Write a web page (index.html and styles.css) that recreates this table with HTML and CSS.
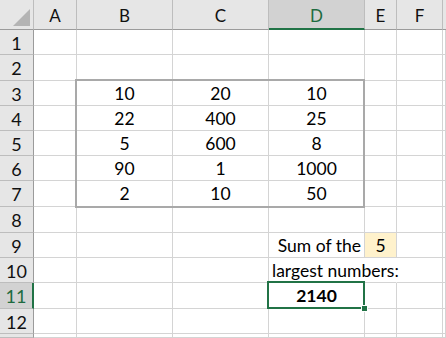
FILE: index.html
```html
<!DOCTYPE html>
<html>
<head>
<meta charset="utf-8">
<link rel="stylesheet" href="styles.css">
</head>
<body>
<div class="wrap">
<div class="sheet">
  <div class="corner"><span class="tri"></span></div>
  <div class="ch">A</div>
  <div class="ch">B</div>
  <div class="ch">C</div>
  <div class="ch sel">D</div>
  <div class="ch">E</div>
  <div class="ch">F</div>
  <div class="ch last"></div>

  <div class="rh">1</div><div class="c"></div><div class="c"></div><div class="c"></div><div class="c"></div><div class="c"></div><div class="c"></div><div class="c"></div>
  <div class="rh">2</div><div class="c"></div><div class="c"></div><div class="c"></div><div class="c"></div><div class="c"></div><div class="c"></div><div class="c"></div>
  <div class="rh">3</div><div class="c"></div><div class="c n">10</div><div class="c n">20</div><div class="c n">10</div><div class="c"></div><div class="c"></div><div class="c"></div>
  <div class="rh">4</div><div class="c"></div><div class="c n">22</div><div class="c n">400</div><div class="c n">25</div><div class="c"></div><div class="c"></div><div class="c"></div>
  <div class="rh">5</div><div class="c"></div><div class="c n">5</div><div class="c n">600</div><div class="c n">8</div><div class="c"></div><div class="c"></div><div class="c"></div>
  <div class="rh">6</div><div class="c"></div><div class="c n">90</div><div class="c n">1</div><div class="c n">1000</div><div class="c"></div><div class="c"></div><div class="c"></div>
  <div class="rh">7</div><div class="c"></div><div class="c n">2</div><div class="c n">10</div><div class="c n">50</div><div class="c"></div><div class="c"></div><div class="c"></div>
  <div class="rh">8</div><div class="c"></div><div class="c"></div><div class="c"></div><div class="c"></div><div class="c"></div><div class="c"></div><div class="c"></div>
  <div class="rh">9</div><div class="c"></div><div class="c"></div><div class="c"></div><div class="c r">Sum of the</div><div class="c n input">5</div><div class="c"></div><div class="c"></div>
  <div class="rh">10</div><div class="c"></div><div class="c"></div><div class="c"></div><div class="c l over">largest numbers:</div><div class="c over"></div><div class="c"></div><div class="c"></div>
  <div class="rh sel">11</div><div class="c"></div><div class="c"></div><div class="c"></div><div class="c n b">2140</div><div class="c"></div><div class="c"></div><div class="c"></div>
  <div class="rh">12</div><div class="c"></div><div class="c"></div><div class="c"></div><div class="c"></div><div class="c"></div><div class="c"></div><div class="c"></div>
  <div class="rh"></div><div class="c"></div><div class="c"></div><div class="c"></div><div class="c"></div><div class="c"></div><div class="c"></div><div class="c"></div>
</div>
<div class="sheet overlay">
  <div class="range"></div>
  <div class="active"><span class="handle"></span></div>
</div>
</div>
</body>
</html>
```

FILE: styles.css
```css
html, body {
  margin: 0;
  padding: 0;
  background: #ffffff;
  overflow: hidden;
}

.wrap {
  display: grid;
  width: 446px;
  height: 338px;
  overflow: hidden;
}

.sheet {
  grid-area: 1 / 1;
  display: grid;
  grid-template-columns: 34px 43px 96px 96px 96px 32px 46px 1fr;
  grid-template-rows: 30px 25px 26px 25px 25px 25px 25px 26px 26px 25px 25px 26px 25px 1fr;
  font-family: Lato, "Liberation Sans", sans-serif;
  color: #000;
}

.overlay {
  pointer-events: none;
}

.corner {
  background: #e6e6e6;
  border-right: 1px solid #bdbdbd;
  border-bottom: 1px solid #9b9b9b;
  position: relative;
}

.tri {
  position: absolute;
  right: 3px;
  bottom: 3px;
  width: 0;
  height: 0;
  border-left: 17px solid transparent;
  border-bottom: 17px solid #b4b4b4;
}

.ch {
  background: #e6e6e6;
  border-right: 1px solid #bdbdbd;
  border-bottom: 1px solid #9b9b9b;
  font-size: 17px;
  line-height: 31px;
  text-align: center;
  color: #111;
}

.ch.sel {
  background: #d2d2d2;
  border-bottom: 2px solid #217346;
  color: #1e6b40;
}

.ch.last {
  border-right: none;
}

.rh {
  background: #e6e6e6;
  border-right: 1px solid #9b9b9b;
  border-bottom: 1px solid #bdbdbd;
  font-size: 18px;
  line-height: 26px;
  text-align: center;
  color: #111;
}

.rh.sel {
  background: #d2d2d2;
  border-right: 2px solid #217346;
  color: #1e6b40;
}

.c {
  border-right: 1px solid #d4d4d4;
  border-bottom: 1px solid #d4d4d4;
  font-size: 17.5px;
  line-height: 26px;
  white-space: nowrap;
}

.n { text-align: center; }
.r { text-align: right; padding-right: 3px; }
.l { text-align: left; padding-left: 3px; }
.b { font-weight: 700; }
.over { border-right-color: transparent; }
.input { background: #fff2cc; }

.range {
  grid-column: 3 / 6;
  grid-row: 4 / 9;
  border: 2px solid #a9a9a9;
  margin: -2px 0 -1px -2px;
}

.active {
  grid-column: 5 / 6;
  grid-row: 12 / 13;
  border: 2px solid #217346;
  margin: -2px 0 0 -2px;
  position: relative;
}

.handle {
  position: absolute;
  right: -5px;
  bottom: -5px;
  width: 5px;
  height: 5px;
  background: #217346;
  border: 1px solid #ffffff;
}
```
